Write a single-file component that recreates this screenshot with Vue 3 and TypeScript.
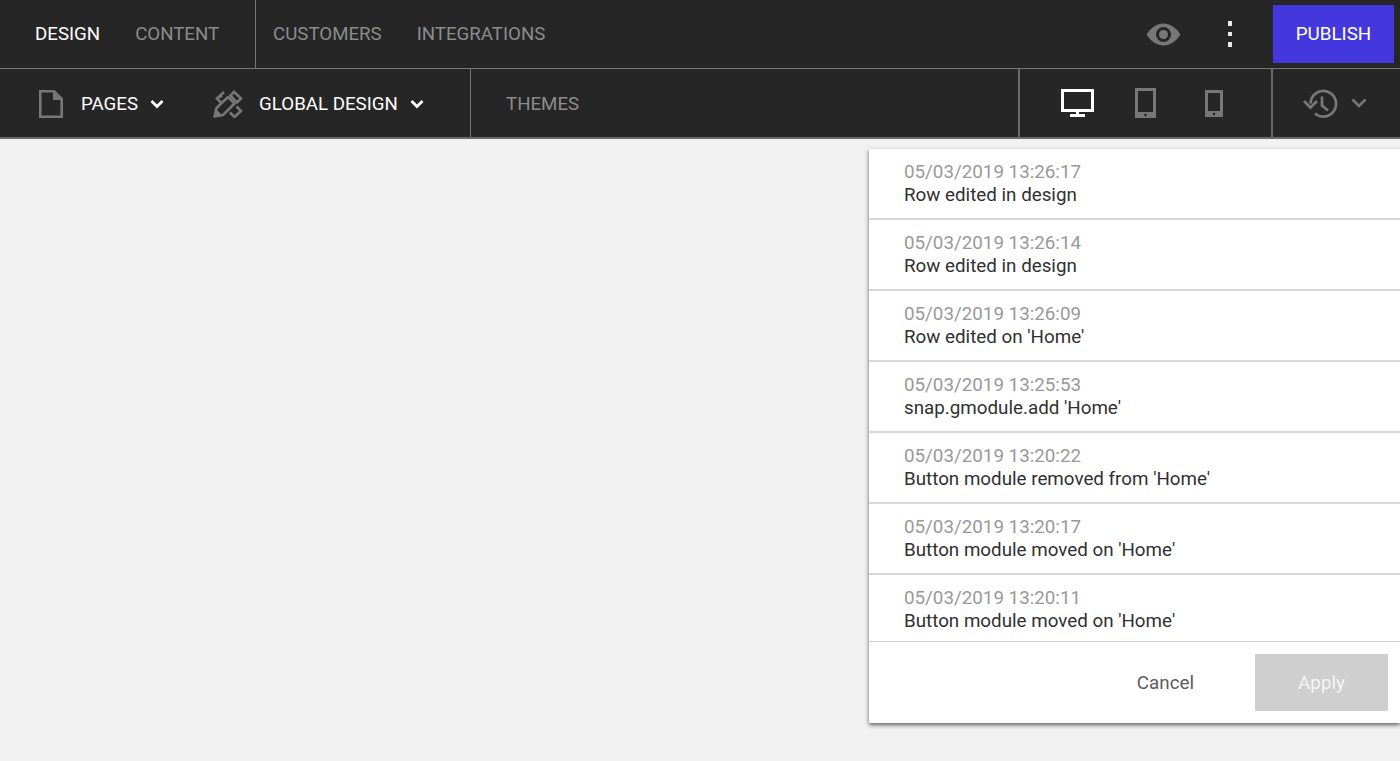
<script setup lang="ts">
interface Entry { time: string; label: string }
const entries: Entry[] = [
  { time: '05/03/2019 13:26:17', label: 'Row edited in design' },
  { time: '05/03/2019 13:26:14', label: 'Row edited in design' },
  { time: '05/03/2019 13:26:09', label: "Row edited on 'Home'" },
  { time: '05/03/2019 13:25:53', label: "snap.gmodule.add 'Home'" },
  { time: '05/03/2019 13:20:22', label: "Button module removed from 'Home'" },
  { time: '05/03/2019 13:20:17', label: "Button module moved on 'Home'" },
  { time: '05/03/2019 13:20:11', label: "Button module moved on 'Home'" },
]
</script>

<template>
  <div class="page">
    <header class="bar bar-top">
      <nav class="group group-main">
        <span class="tab active">DESIGN</span>
        <span class="tab">CONTENT</span>
      </nav>
      <nav class="group group-second">
        <span class="tab">CUSTOMERS</span>
        <span class="tab">INTEGRATIONS</span>
      </nav>
      <div class="top-actions">
        <svg class="eye" width="35" height="23" viewBox="0 0 35 23">
          <path d="M0.500 11.500C5 4.500 11 0.500 17.500 0.500S30 4.500 34.500 11.500C30 18.500 24 22.500 17.500 22.500S5 18.500 0.500 11.500z" fill="#777" />
          <circle cx="17.500" cy="11.500" r="7.500" fill="#262626" />
          <circle cx="17.500" cy="11.500" r="4.500" fill="#777" />
        </svg>
        <span class="dots"><i></i><i></i><i></i></span>
        <button class="publish">PUBLISH</button>
      </div>
    </header>

    <div class="bar bar-sub">
      <div class="group group-tools">
        <span class="tool tool-pages">
          <svg width="24" height="28" viewBox="0 0 24 28">
            <path d="M1.300 1.300H15L22.700 9v17.700H1.300z" fill="none" stroke="#777" stroke-width="2.600" />
            <path d="M14 1.300L22.700 10H14z" fill="#777" />
          </svg>
          <span class="tool-label">PAGES</span>
          <svg class="chev" width="14" height="10" viewBox="0 0 14 10">
            <path d="M1.500 2l5.500 5.500L12.500 2" fill="none" stroke="#fff" stroke-width="2.800" />
          </svg>
        </span>
        <span class="tool tool-global">
          <svg width="30" height="28" viewBox="0 0 30 28">
            <path d="M1.500 26.500l2-8.500L15 7l6.500 6.500L10 25z" fill="none" stroke="#777" stroke-width="2.600" stroke-linejoin="round" />
            <path d="M1 27l2.500-7.500 5 5z" fill="#777" />
            <path d="M11 2L4 8.500l4.500 4.500M7 5.500l1.800 1.800" fill="none" stroke="#777" stroke-width="2.600" />
            <path d="M21 1.800L28 8.500l-4 4-6.500-6.800zM23.500 16.500L28 21l-6.500 6-4.500-4.500" fill="none" stroke="#777" stroke-width="2.600" />
          </svg>
          <span class="tool-label">GLOBAL DESIGN</span>
          <svg class="chev" width="14" height="10" viewBox="0 0 14 10">
            <path d="M1.500 2l5.500 5.500L12.500 2" fill="none" stroke="#fff" stroke-width="2.800" />
          </svg>
        </span>
      </div>
      <div class="group-themes"><span class="tab">THEMES</span></div>
      <div class="devices">
        <svg width="33" height="29" viewBox="0 0 33 29">
          <path d="M1.500 1.500h30v20h-30z" fill="none" stroke="#fff" stroke-width="3" />
          <path d="M15 22h3v3h-3zM9 25h15v3H9z" fill="#fff" />
        </svg>
        <svg class="tablet" width="21" height="30" viewBox="0 0 21 30">
          <path fill-rule="evenodd" d="M0 0h21v30H0zM3 3v21h15V3z" fill="#777" />
          <circle cx="10.500" cy="27" r="1.200" fill="#222" />
        </svg>
        <svg class="phone" width="18" height="27" viewBox="0 0 18 27">
          <path fill-rule="evenodd" d="M0 0h18v27H0zM3 3v18h12V3z" fill="#777" />
          <circle cx="9" cy="24" r="1.200" fill="#222" />
        </svg>
      </div>
      <div class="history">
        <svg width="36" height="30" viewBox="0 0 36 30">
          <path d="M8.500 15.500A12.800 12.800 0 1 1 13 25.500" fill="none" stroke="#777" stroke-width="2.800" />
          <path d="M2 13l6.500 6.500L15 13" fill="none" stroke="#777" stroke-width="2.800" />
          <path d="M20 8.500v9l6 5" fill="none" stroke="#777" stroke-width="2.800" />
        </svg>
        <svg width="16" height="10" viewBox="0 0 16 10">
          <path d="M1.500 1.500L8 8l6.500-6.500" fill="none" stroke="#777" stroke-width="2.600" />
        </svg>
      </div>
    </div>

    <section class="panel">
      <ul class="list">
        <li v-for="(entry, i) in entries" :key="i" class="row">
          <div class="time">{{ entry.time }}</div>
          <div class="label">{{ entry.label }}</div>
        </li>
      </ul>
      <footer class="panel-foot">
        <button class="cancel">Cancel</button>
        <button class="apply">Apply</button>
      </footer>
    </section>
  </div>
</template>

<style>
html, body { margin: 0; background: #f1f1f1; }
</style>

<style scoped>
.page {
  position: relative;
  height: 761px;
  overflow: hidden;
  background: #f1f1f1;
  font-family: Roboto, "Liberation Sans", sans-serif;
}
.bar {
  display: flex;
  box-sizing: border-box;
  background: #262626;
  align-items: stretch;
}
.bar-top { height: 69px; border-bottom: 1px solid #777; }
.bar-sub { height: 70px; border-bottom: 2px solid #6a6a6a; }
.group { display: flex; align-items: center; box-sizing: border-box; }
.group-main { width: 256px; padding-left: 35px; gap: 35px; border-right: 1px solid #777; }
.group-second { padding-left: 17px; gap: 35px; }
.tab { font-size: 18.7px; color: #8c8c8c; line-height: 1; }
.tab.active { color: #fff; }
.top-actions { margin-left: auto; display: flex; align-items: center; }
.eye { margin-right: 47px; }
.dots { display: flex; flex-direction: column; gap: 6px; margin-right: 41px; }
.dots i { display: block; width: 4.500px; height: 4.500px; background: #e8e8e8; }
.publish {
  width: 121px;
  height: 58px;
  margin-right: 6px;
  border: 0;
  background: #4338dd;
  color: #fff;
  font: 18.8px Roboto, sans-serif;
}
.group-tools { width: 471px; padding: 2px 0 0 39px; border-right: 1px solid #777; }
.tool { display: flex; align-items: center; }
.tool-global { margin-left: 49px; }
.tool-label { font-size: 18.7px; color: #fff; line-height: 1; margin-left: 18px; }
.tool-global .tool-label { margin-left: 16px; }
.chev { margin-left: 12px; }
.group-themes { display: flex; align-items: center; padding: 2px 0 0 35px; }
.devices {
  margin-left: auto;
  box-sizing: border-box;
  width: 253px;
  display: flex;
  align-items: center;
  padding-left: 41px;
  border-left: 2px solid #6a6a6a;
}
.tablet { margin-left: 41px; }
.phone { margin-left: 49px; }
.history {
  box-sizing: border-box;
  width: 129px;
  display: flex;
  align-items: center;
  gap: 13px;
  padding-left: 29px;
  border-left: 2px solid #6a6a6a;
}
.panel {
  position: absolute;
  left: 869px;
  top: 149px;
  width: 531px;
  height: 574px;
  background: #fff;
  box-shadow: 0 2px 4px rgba(0, 0, 0, 0.6);
  display: flex;
  flex-direction: column;
}
.list { list-style: none; margin: 0; padding: 0; height: 492px; overflow: hidden; }
.row {
  box-sizing: border-box;
  height: 71px;
  padding: 12px 35px 0;
  border-bottom: 2px solid #d8d8d8;
  font-size: 18.8px;
  line-height: 23px;
}
.row:last-child { border-bottom: 0; }
.time { color: #999; }
.label { color: #303030; }
.panel-foot {
  flex: 1;
  display: flex;
  align-items: flex-start;
  justify-content: flex-end;
  padding: 12px 12px 0 0;
  border-top: 1px solid #cfcfcf;
}
.cancel {
  height: 57px;
  border: 0;
  background: none;
  color: #5c5c5c;
  font: 18.8px Roboto, sans-serif;
  margin-right: 61px;
  padding: 0;
}
.apply {
  width: 133px;
  height: 57px;
  border: 0;
  background: #cfcfcf;
  color: #f4f4f4;
  font: 18.8px Roboto, sans-serif;
}
</style>
